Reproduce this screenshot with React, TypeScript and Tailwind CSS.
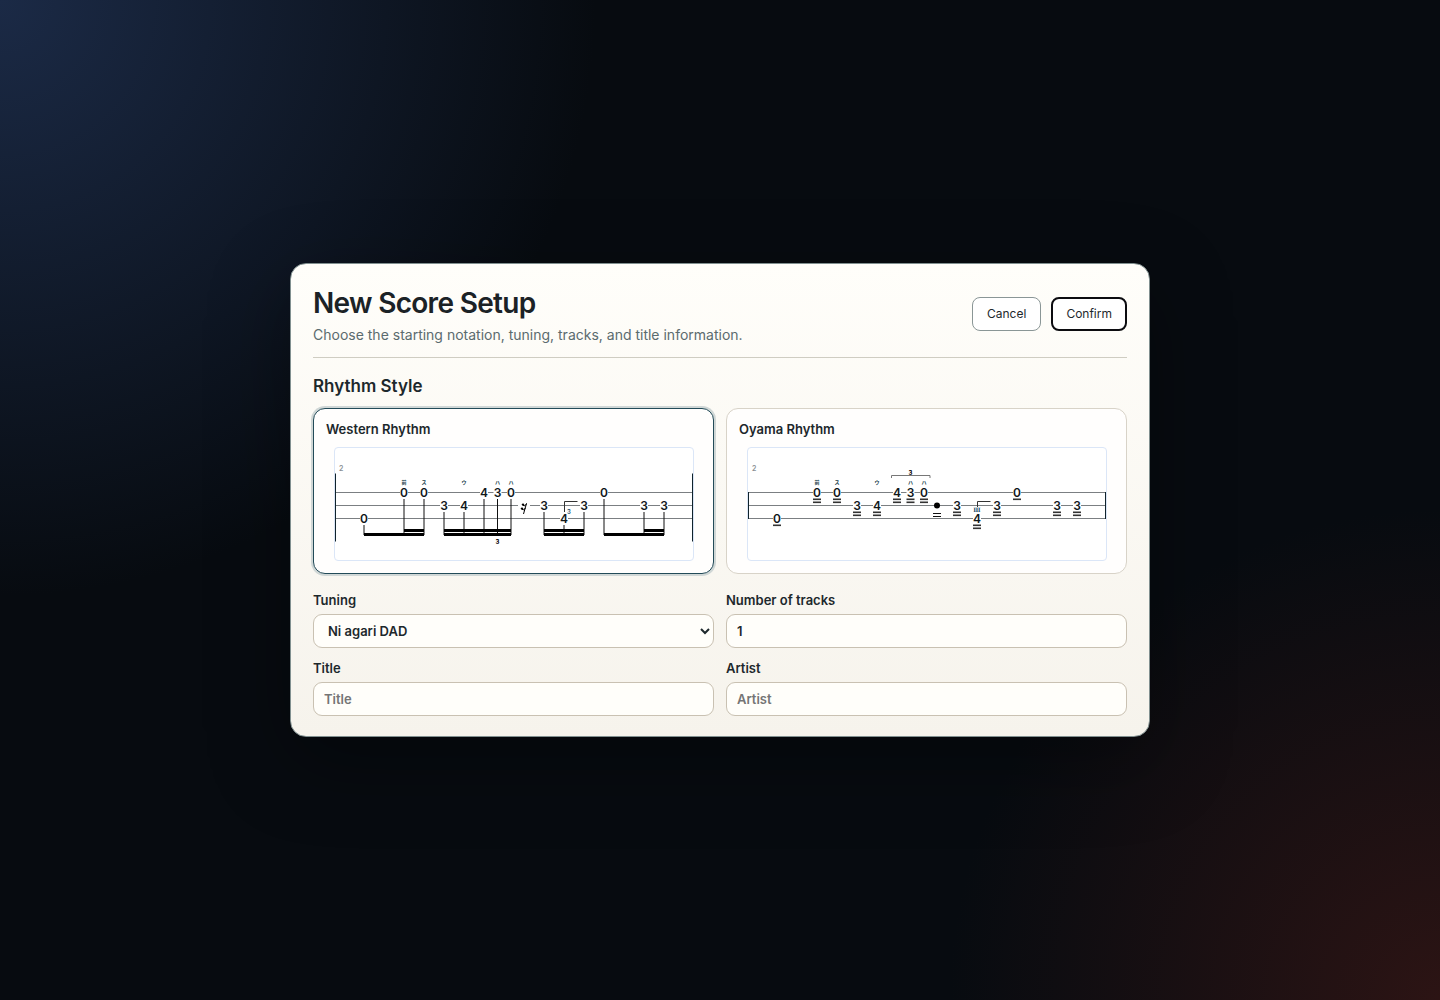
import { useState } from 'react'

type Glyph = { x: number; row: number; label: string; mark?: string; lines?: number }

const rows = [44.5, 57.5, 70.5]

const westernNotes: Glyph[] = [
  { x: 29, row: 2, label: '0' },
  { x: 69, row: 0, label: '0', mark: '前' },
  { x: 89, row: 0, label: '0', mark: 'ス' },
  { x: 109, row: 1, label: '3' },
  { x: 129, row: 1, label: '4', mark: 'ウ' },
  { x: 149, row: 0, label: '4' },
  { x: 162.5, row: 0, label: '3', mark: 'ハ' },
  { x: 176, row: 0, label: '0', mark: 'ハ' },
  { x: 209, row: 1, label: '3' },
  { x: 229, row: 2, label: '4' },
  { x: 249, row: 1, label: '3' },
  { x: 269, row: 0, label: '0' },
  { x: 309, row: 1, label: '3' },
  { x: 329, row: 1, label: '3' }
]

const oyamaLines = [1, 2, 2, 2, 2, 2, 2, 2, 2, 2, 2, 1, 2, 2]
const oyamaNotes = westernNotes.map((note, i) => ({ ...note, lines: oyamaLines[i] }))

// x start, x end, y
const beams = [
  [29, 89, 85],
  [69, 89, 81],
  [109, 176, 85],
  [109, 176, 81],
  [209, 249, 85],
  [209, 249, 81],
  [269, 329, 85],
  [309, 329, 81]
]

const Staff = () => (
  <g stroke="#7b7f82" strokeWidth="1">
    {rows.map((y) => (
      <line key={y} x1="0" y1={y} x2="358" y2={y} />
    ))}
  </g>
)

const Notes = ({ notes }: { notes: Glyph[] }) => (
  <>
    {notes.map((note) => (
      <g key={note.x} fill="#11181c" textAnchor="middle">
        <rect x={note.x - 4} y={rows[note.row] - 6} width="8" height="12" fill="#fff" />
        <text x={note.x} y={rows[note.row] + 4.5} fontSize="12" fontWeight="600">
          {note.label}
        </text>
        {note.mark && (
          <text x={note.x} y="36" fontSize="5" fontWeight="700" fill="#153d49">
            {note.mark}
          </text>
        )}
        {note.lines && <rect x={note.x - 4} y={rows[note.row] + 6} width="8" height="1.6" fill="#333" />}
        {note.lines === 2 && (
          <rect x={note.x - 4} y={rows[note.row] + 9} width="8" height="1.6" fill="#333" />
        )}
      </g>
    ))}
  </>
)

const WesternPreview = () => (
  <svg viewBox="0 0 358 112" className="block w-full" aria-hidden="true">
    <Staff />
    <text x="4" y="23" fontSize="7" fill="#8a8f93">2</text>
    <path d="M.5 25.500V93.500M357.500 25.500V93.500" stroke="#10232c" strokeWidth="1" />
    {westernNotes.map((note) => (
      <line key={note.x} x1={note.x} x2={note.x} y1={rows[note.row] + 6.5} y2="87" stroke="#111" strokeWidth="1" />
    ))}
    {beams.map(([x1, x2, y]) => (
      <rect key={`${x1}-${y}`} x={x1} y={y} width={x2 - x1} height="3" fill="#000" />
    ))}
    <Notes notes={westernNotes} />
    <rect x="183" y="50" width="12" height="18" fill="#fff" />
    <g stroke="#000" fill="none" strokeWidth="1">
      <path d="M188 57.200C189.500 58.500 190.800 57.500 191.500 55.500L188.500 66M187 61.200C188.500 62.300 189.600 61.800 190.300 60" />
      <circle cx="188" cy="56.600" r="1.200" fill="#000" stroke="none" />
      <circle cx="187" cy="60.600" r="1.200" fill="#000" stroke="none" />
    </g>
    <path d="M229.500 64V53.500H242.500" stroke="#333" fill="none" />
    <text x="234" y="66" fontSize="6" fontWeight="600" fill="#24506c" textAnchor="middle">3</text>
    <text x="162.500" y="96" fontSize="6" fontWeight="700" textAnchor="middle">3</text>
  </svg>
)

const OyamaPreview = () => (
  <svg viewBox="0 0 358 112" className="block w-full" aria-hidden="true">
    <Staff />
    <text x="4" y="23" fontSize="7" fill="#8a8f93">2</text>
    <path d="M.5 44V71M357.500 44V71" stroke="#10232c" strokeWidth="1" />
    <Notes notes={oyamaNotes} />
    <path d="M143.500 30V27.500H182V30" stroke="#777" fill="none" />
    <text x="162.500" y="27" fontSize="6" fontWeight="700" textAnchor="middle">3</text>
    <circle cx="189" cy="57.500" r="3" />
    <path d="M185 65.500h8M185 68.500h8" stroke="#111" strokeWidth="1" />
    <path d="M229.500 59V53.500H242.500" stroke="#333" fill="none" />
    <text x="229" y="64" fontSize="6" fill="#24506c" textAnchor="middle" className="font-['DejaVu_Serif',serif]">
      Ⅲ
    </text>
  </svg>
)

const styles = [
  { id: 'western', name: 'Western Rhythm', Preview: WesternPreview },
  { id: 'oyama', name: 'Oyama Rhythm', Preview: OyamaPreview }
]

const fieldClass =
  'h-[34px] w-full rounded-[9px] border border-[#c9c1b2] bg-[#fffefa] px-2.5 text-[13px] font-semibold text-[#1d282c] placeholder:text-[#757575] placeholder:opacity-100'

const App = () => {
  const [style, setStyle] = useState('western')

  return (
    <main className="flex min-h-screen items-center justify-center bg-[#070b10] bg-[radial-gradient(circle_at_top_left,#1b2a46_0%,transparent_34%),radial-gradient(circle_at_bottom_right,#2c1414_0%,transparent_28%)] p-6 font-['Inter','Noto_Sans_CJK_JP',sans-serif] text-[#1d282c]">
      <form
        className="w-full max-w-[860px] rounded-2xl border border-[#819090] bg-linear-to-b from-[#fffefa] to-[#f6f3ec] px-[22px] pt-[22px] pb-5 shadow-[0_24px_80px_rgba(0,0,0,0.35)]"
        onSubmit={(e) => e.preventDefault()}
      >
        <header className="flex items-center justify-between gap-4 border-b border-[#cfcdc2] pb-3">
          <div>
            <h1 className="text-[28px] leading-[34px] font-semibold tracking-tight text-[#1b2226]">New Score Setup</h1>
            <p className="mt-[5px] text-sm leading-5 text-[#5b6b6e]">
              Choose the starting notation, tuning, tracks, and title information.
            </p>
          </div>
          <div className="flex gap-2.5 pb-1">
            <button type="button" className="h-[34px] rounded-lg border border-[#8a9696] bg-white px-3.5 text-xs">
              Cancel
            </button>
            <button type="submit" className="h-[34px] rounded-lg border-2 border-[#0c0c10] bg-white px-[13px] text-xs">
              Confirm
            </button>
          </div>
        </header>

        <h2 className="mt-4 mb-2.5 text-[17px] leading-6 font-semibold">Rhythm Style</h2>
        <div className="grid grid-cols-2 gap-3">
          {styles.map(({ id, name, Preview }) => (
            <button
              key={id}
              type="button"
              aria-pressed={style === id}
              onClick={() => setStyle(id)}
              className={`rounded-xl border bg-[#fffefd] p-3 text-left text-[13px] font-semibold ${
                style === id ? 'border-[#234b58] shadow-[0_0_0_2px_#d0d7d6]' : 'border-[#d8d3c8]'
              }`}
            >
              <span className="block leading-4">{name}</span>
              <span className="mt-2.5 mr-[7px] ml-2 block overflow-hidden rounded-[4px] border border-[#dbe6f7] bg-white">
                <Preview />
              </span>
            </button>
          ))}
        </div>

        <div className="mt-[18px] grid grid-cols-2 gap-3 text-[13px] leading-4 font-semibold">
          <label className="grid gap-1.5">
            Tuning
            <select className={fieldClass}>
              <option>Ni agari DAD</option>
            </select>
          </label>
          <label className="grid gap-1.5">
            Number of tracks
            <input type="number" defaultValue="1" className={fieldClass} />
          </label>
          <label className="grid gap-1.5">
            Title
            <input type="text" placeholder="Title" className={fieldClass} />
          </label>
          <label className="grid gap-1.5">
            Artist
            <input type="text" placeholder="Artist" className={fieldClass} />
          </label>
        </div>
      </form>
    </main>
  )
}

export default App
